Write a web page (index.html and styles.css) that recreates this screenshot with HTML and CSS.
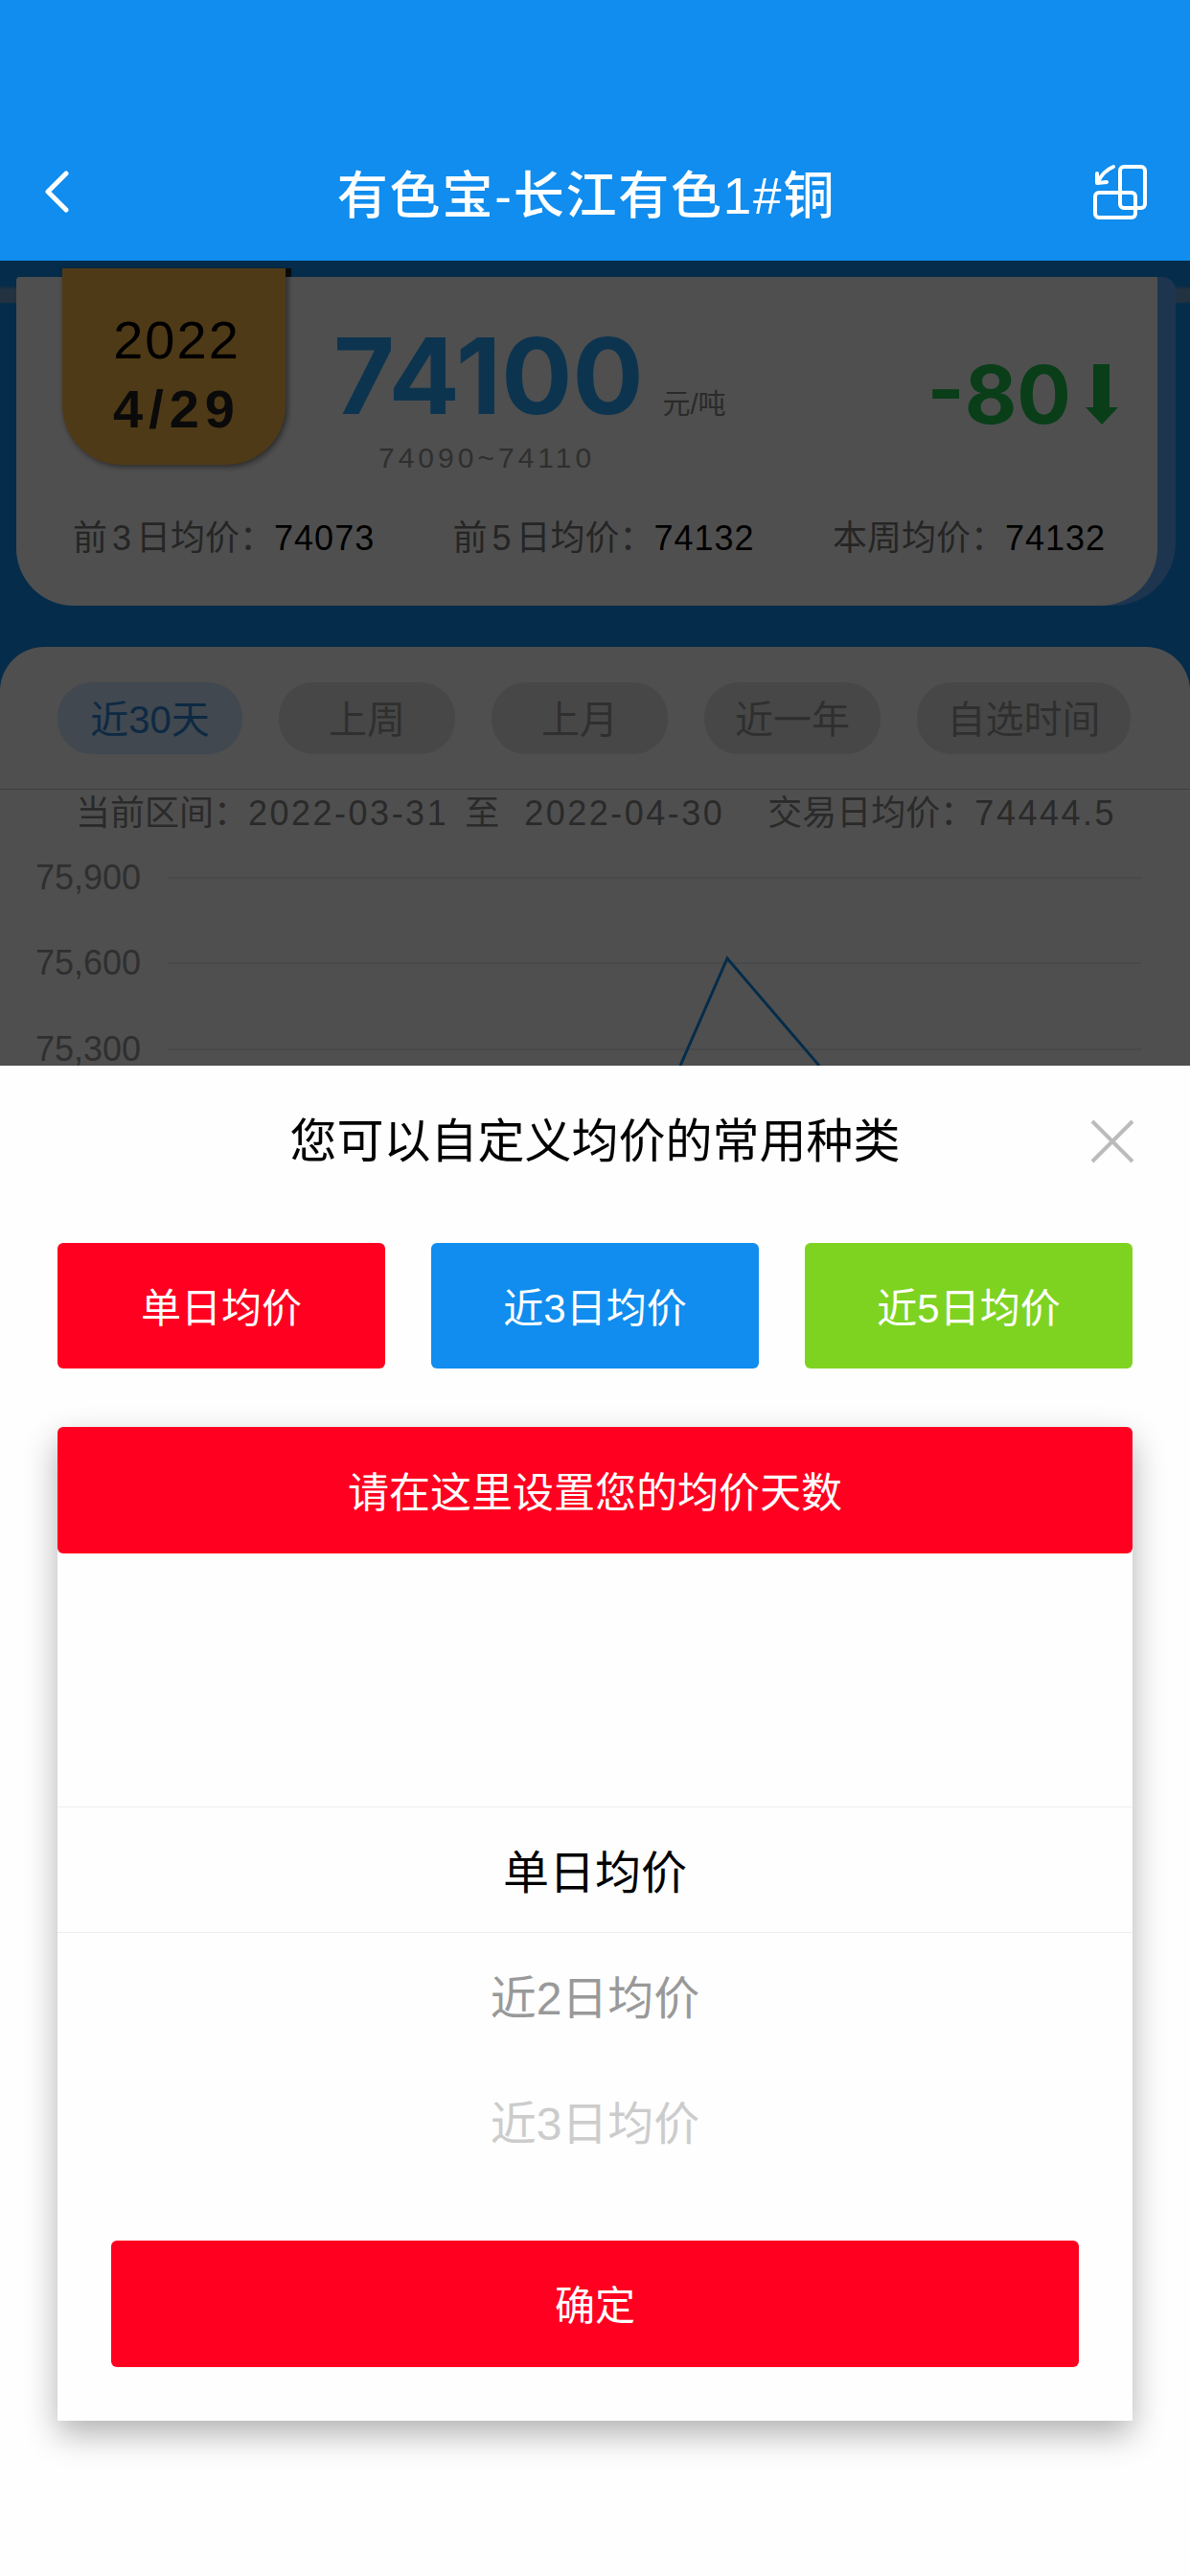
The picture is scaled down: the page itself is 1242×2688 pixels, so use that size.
FILE: index.html
```html
<!DOCTYPE html>
<html lang="zh">
<head>
    <meta charset="UTF-8">
    <title>有色宝-长江有色1#铜</title>
    <link rel="stylesheet" href="styles.css">
</head>
<body>
    <header class="topbar">
        <svg class="back-icon" viewBox="0 0 26 44"><path d="M23 3 L4 22 L23 41" /></svg>
        <h1>有色宝-长江有色1#铜</h1>
        <svg class="swap-icon" viewBox="0 0 57 58">
            <rect x="29" y="3" width="26" height="43" rx="4" />
            <rect x="3" y="30" width="42" height="26" rx="4" />
            <path d="M22 3 C15 6 9 12 6 19" />
            <path d="M5 10 L5 20 L15 19" />
        </svg>
    </header>

    <main class="content">
        <section class="price-wrap">
            <div class="price-card">
                <div class="price-top">
                    <div class="date-tag">
                        <span class="date-year">2022</span>
                        <span class="date-day">4/29</span>
                    </div>
                    <div class="price-main">
                        <div class="price-line">
                            <span class="price-value">74100</span>
                            <span class="price-unit">元/吨</span>
                        </div>
                        <div class="price-range">74090~74110</div>
                    </div>
                    <div class="price-change">
                        <span>-80</span>
                        <svg class="down-arrow" viewBox="0 0 34 63"><path d="M8 0 H25 V45 H34 L17 63 L0 45 H8 Z" /></svg>
                    </div>
                </div>
                <div class="averages">
                    <span class="avg">前<i>3</i>日均价：<b>74073</b></span>
                    <span class="avg">前<i>5</i>日均价：<b>74132</b></span>
                    <span class="avg">本周均价：<b>74132</b></span>
                </div>
            </div>
        </section>

        <section class="chart-card">
            <div class="tabs">
                <span class="tab tab-active">近30天</span>
                <span class="tab">上周</span>
                <span class="tab">上月</span>
                <span class="tab">近一年</span>
                <span class="tab tab-wide">自选时间</span>
            </div>
            <p class="range-info">当前区间：<span class="range-num">2022-03-31</span><span class="range-to">至</span><span class="range-num">2022-04-30</span><span class="range-avg">交易日均价：</span><span class="range-num">74444.5</span></p>
            <svg class="chart" viewBox="0 0 1242 238">
                <g class="chart-grid">
                    <line x1="175" y1="42" x2="1192" y2="42" />
                    <line x1="175" y1="131" x2="1192" y2="131" />
                    <line x1="175" y1="221" x2="1192" y2="221" />
                </g>
                <g class="chart-labels">
                    <text x="147" y="54">75,900</text>
                    <text x="147" y="143">75,600</text>
                    <text x="147" y="233">75,300</text>
                </g>
                <polyline class="chart-line" points="710,238 759,126 855,238" />
            </svg>
        </section>
        <div class="overlay"></div>
    </main>

    <section class="sheet">
        <div class="sheet-title">
            <span></span>
            <h2>您可以自定义均价的常用种类</h2>
            <svg class="close-icon" viewBox="0 0 46 46"><path d="M2 2 L44 44 M44 2 L2 44" /></svg>
        </div>
        <div class="kinds">
            <span class="kind kind-red">单日均价</span>
            <span class="kind kind-blue">近3日均价</span>
            <span class="kind kind-green">近5日均价</span>
        </div>
        <div class="panel">
            <div class="panel-head">请在这里设置您的均价天数</div>
            <div class="picker">
                <div class="picker-row picker-selected">单日均价</div>
                <div class="picker-row picker-next">近2日均价</div>
                <div class="picker-row picker-far">近3日均价</div>
            </div>
            <div class="confirm">确定</div>
        </div>
    </section>
</body>
</html>
```

FILE: styles.css
```css
* {
    box-sizing: border-box;
}
body {
    margin: 0;
    width: 1242px;
    height: 2688px;
    display: flex;
    flex-direction: column;
    overflow: hidden;
    font-family: "Liberation Sans", "Noto Sans CJK SC", sans-serif;
    background-color: #fefefe;
}

/* top bar */
.topbar {
    height: 272px;
    flex: none;
    padding: 132px 45px 4px 46px;
    display: flex;
    align-items: center;
    justify-content: space-between;
    background-color: #108dee;
}
.topbar h1 {
    margin: 0 0 0 12px;
    font-size: 53px;
    font-weight: 500;
    letter-spacing: 1.8px;
    color: white;
}
.back-icon {
    width: 26px;
    height: 44px;
    fill: none;
    stroke: white;
    stroke-width: 5;
    stroke-linecap: round;
    stroke-linejoin: round;
}
.swap-icon {
    width: 57px;
    height: 58px;
    fill: none;
    stroke: white;
    stroke-width: 4;
    stroke-linecap: round;
    stroke-linejoin: round;
}

/* dimmed page behind the sheet */
.content {
    flex: 1;
    position: relative;
    overflow: hidden;
    padding-top: 17px;
    background: linear-gradient(#108dee 0, #108dee 26px, #70a0d0 30px, #70a0d0 43px, #108dee 45px);
}
.overlay {
    position: absolute;
    inset: 0;
    background-color: rgba(0, 0, 0, 0.69);
}
.price-wrap {
    width: 1210px;
    margin-left: 17px;
    background-color: #62abff;
    border-radius: 4px 14px 66px 66px;
}
.price-card {
    width: 1191px;
    height: 343px;
    background-color: white;
    border-radius: 4px 0 60px 60px;
}
.price-top {
    display: flex;
    height: 196px;
    padding-left: 48px;
}
.date-tag {
    position: relative;
    width: 233px;
    height: 205px;
    margin-top: -9px;
    padding: 39px 0 0 6px;
    display: flex;
    flex-direction: column;
    align-items: center;
    background-color: #ffbb4a;
    border-radius: 0 0 62px 62px;
    box-shadow: 2px 2px 6px rgba(0, 0, 0, 0.5);
}
.date-tag::after {
    content: "";
    position: absolute;
    top: 0;
    right: -6px;
    width: 6px;
    height: 9px;
    background-color: #222;
}
.date-year {
    font-size: 56px;
    line-height: 72px;
    letter-spacing: 2px;
    color: black;
}
.date-day {
    font-size: 56px;
    line-height: 72px;
    font-weight: bold;
    letter-spacing: 6px;
    color: #222;
}
.price-main {
    margin-left: 50px;
    width: 420px;
}
.price-line {
    display: flex;
    align-items: baseline;
    height: 169px;
    padding-top: 47px;
}
.price-value {
    font-family: Inter, "Liberation Sans", sans-serif;
    font-size: 110px;
    line-height: 112px;
    font-weight: bold;
    color: #2ba8ff;
}
.price-unit {
    margin-left: 20px;
    font-size: 29px;
    color: #888;
}
.price-range {
    margin-left: 47px;
    font-size: 30px;
    line-height: 40px;
    letter-spacing: 4px;
    color: #999;
}
.price-change {
    margin-left: auto;
    padding: 91px 41px 0 0;
    display: flex;
    align-items: flex-start;
    gap: 15px;
    font-family: Inter, "Liberation Sans", sans-serif;
    font-size: 84px;
    line-height: 64px;
    font-weight: bold;
    color: #1ec850;
}
.down-arrow {
    width: 34px;
    height: 63px;
    fill: #1ec850;
}
.averages {
    display: flex;
    justify-content: space-between;
    padding: 52px 54px 0 59px;
}
.avg {
    font-size: 36px;
    line-height: 50px;
    color: #777;
}
.avg i {
    margin: 0 5px;
    font-style: normal;
}
.avg b {
    font-weight: normal;
    letter-spacing: 1px;
    color: black;
}
.chart-card {
    margin-top: 43px;
    padding-top: 37px;
    background-color: white;
    border-radius: 46px 46px 0 0;
}
.tabs {
    display: flex;
    gap: 38px;
    padding: 0 60px 36px;
    border-bottom: 1px solid #ccc;
}
.tab {
    width: 184px;
    height: 75px;
    padding-bottom: 3px;
    display: flex;
    align-items: center;
    justify-content: center;
    font-size: 40px;
    color: #999;
    background-color: #e5e5e5;
    border-radius: 36px;
}
.tab-active {
    width: 193px;
    color: #2f86d8;
    background-color: #d0e8ff;
}
.tab-wide {
    width: 223px;
}
.range-info {
    margin: 0;
    padding-left: 79px;
    font-size: 36px;
    line-height: 50px;
    color: #888;
}
.range-num {
    letter-spacing: 2.5px;
}
.range-to {
    margin: 0 26px 0 17px;
}
.range-avg {
    margin-left: 45px;
}
.chart {
    display: block;
    width: 1242px;
    height: 238px;
}
.chart-grid line {
    stroke: #d0d8e4;
    stroke-width: 1;
}
.chart-labels text {
    font-size: 36px;
    text-anchor: end;
    fill: #999;
}
.chart-line {
    fill: none;
    stroke: #108dee;
    stroke-width: 3;
}

/* bottom sheet */
.sheet {
    height: 1576px;
    flex: none;
    background-color: #fefefe;
}
.sheet-title {
    height: 185px;
    padding: 56px 58px 0;
    display: grid;
    grid-template-columns: 1fr auto 1fr;
    align-items: start;
}
.sheet-title h2 {
    margin: 0;
    font-size: 49px;
    line-height: 46px;
    font-weight: normal;
    color: black;
}
.close-icon {
    width: 46px;
    height: 46px;
    justify-self: end;
    fill: none;
    stroke: #bbb;
    stroke-width: 4;
}
.kinds {
    display: flex;
    justify-content: space-between;
    padding: 0 60px;
}
.kind {
    width: 342px;
    height: 131px;
    padding-bottom: 2px;
    display: flex;
    align-items: center;
    justify-content: center;
    font-size: 42px;
    color: white;
    border-radius: 6px;
}
.kind-red {
    background-color: #ff0020;
}
.kind-blue {
    background-color: #108dee;
}
.kind-green {
    background-color: #7ed321;
}
.panel {
    height: 1037px;
    margin: 61px 60px 0;
    background-color: #fefefe;
    border-radius: 8px 8px 0 0;
    box-shadow: 0 14px 34px rgba(0, 0, 0, 0.3);
}
.panel-head {
    height: 132px;
    padding-bottom: 3px;
    display: flex;
    align-items: center;
    justify-content: center;
    font-size: 43px;
    color: white;
    background-color: #ff0020;
    border-radius: 6px;
}
.picker {
    padding-top: 264px;
}
.picker-row {
    height: 131px;
    padding-bottom: 3px;
    display: flex;
    align-items: center;
    justify-content: center;
    font-size: 48px;
}
.picker-selected {
    height: 132px;
    color: black;
    border-top: 1px solid #eee;
    border-bottom: 1px solid #eee;
}
.picker-next {
    color: #999;
}
.picker-far {
    color: #ccc;
}
.confirm {
    height: 132px;
    margin: 59px 56px 0;
    padding-bottom: 4px;
    display: flex;
    align-items: center;
    justify-content: center;
    font-size: 42px;
    color: white;
    background-color: #ff0020;
    border-radius: 6px;
}
```
